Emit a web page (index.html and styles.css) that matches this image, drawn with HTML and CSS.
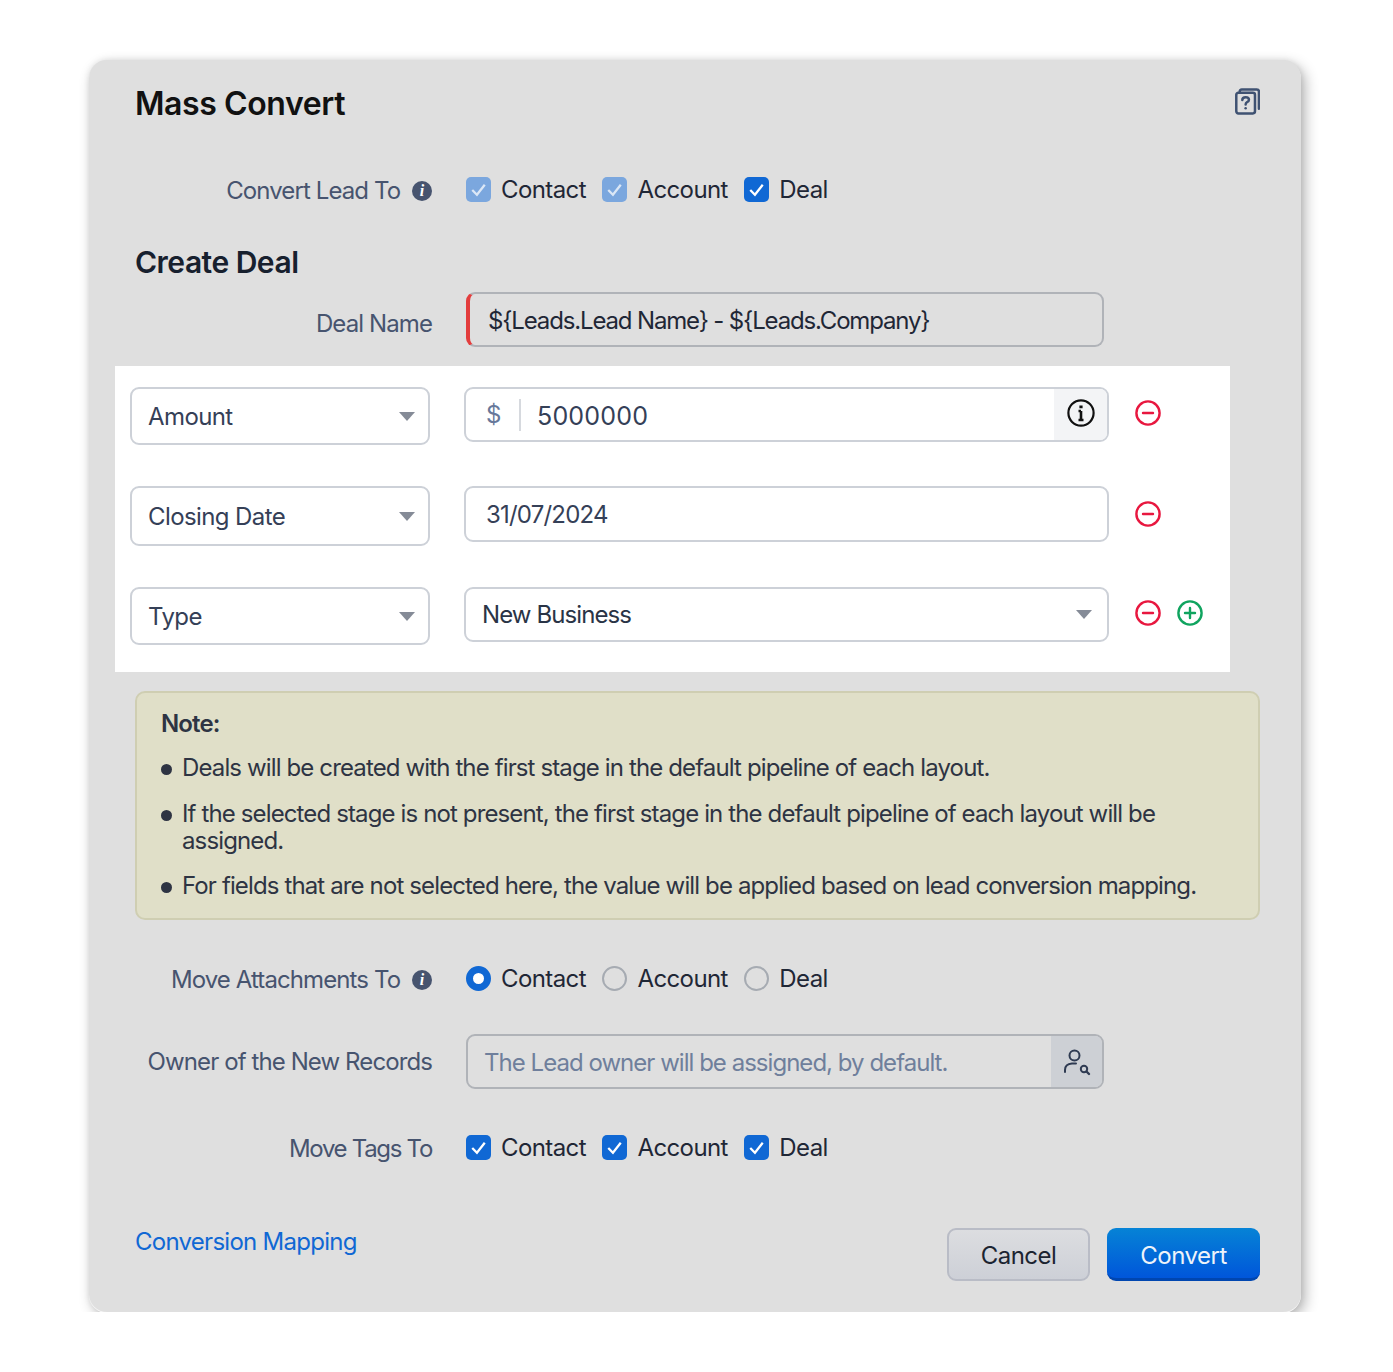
FILE: index.html

```html
<!doctype html>
<html lang="en">
<head>
    <meta charset="utf-8">
    <meta name="viewport" content="width=device-width, initial-scale=1.0">
    <title>Mass Convert</title>
    <link rel="stylesheet" href="styles.css">
</head>
<body>
    <div class="dialog">
        <div class="dialog-head">
            <h1>Mass Convert</h1>
            <svg class="help-icon" viewBox="0 0 24 26" fill="none" stroke="#3f5272" stroke-width="2.4" stroke-linejoin="round" stroke-linecap="round">
                <path d="M4.5 4 V3.5 Q4.5 1.5 6.5 1.5 H21 Q23 1.5 23 3.5 V20"/>
                <rect x="1.2" y="4.5" width="18" height="20" rx="2"/>
                <path d="M7 11.5 Q7 8.8 10.2 8.8 Q13.4 8.8 13.4 11.3 Q13.4 12.8 11.6 13.6 Q10.2 14.3 10.2 16"/>
                <path d="M10.2 19.4 V19.6"/>
            </svg>
        </div>

        <div class="form-row row-convert">
            <div class="label">Convert Lead To <span class="info">i</span></div>
            <div class="options">
                <label class="opt"><span class="check faded"><svg viewBox="0 0 24 24"><path d="M6 12.5 L10.5 17 L18 7.5"/></svg></span>Contact</label>
                <label class="opt"><span class="check faded"><svg viewBox="0 0 24 24"><path d="M6 12.5 L10.5 17 L18 7.5"/></svg></span>Account</label>
                <label class="opt"><span class="check"><svg viewBox="0 0 24 24"><path d="M6 12.5 L10.5 17 L18 7.5"/></svg></span>Deal</label>
            </div>
        </div>

        <h2>Create Deal</h2>

        <div class="form-row row-deal">
            <div class="label label-low">Deal Name</div>
            <div class="field field-required">${Leads.Lead Name} - ${Leads.Company}</div>
        </div>

        <div class="panel">
            <div class="panel-row">
                <div class="select select-left">Amount<span class="arrow"></span></div>
                <div class="input amount">
                    <span class="currency">$</span>
                    <span class="amount-value">5000000</span>
                    <span class="amount-info">
                        <svg width="28" height="28" viewBox="0 0 28 28" fill="none" stroke="#111" stroke-width="2.2">
                            <circle cx="14" cy="14" r="12.6"/>
                            <path d="M14 12 V21 M11.5 12 H14 M11.5 21 H16.5" stroke-width="2.6"/>
                            <path d="M14 6.5 V9.2" stroke-width="3.2"/>
                        </svg>
                    </span>
                </div>
                <div class="row-actions">
                    <svg class="round-btn" viewBox="0 0 26 26" fill="none" stroke="#e8173f" stroke-width="2.4" stroke-linecap="round"><circle cx="13" cy="13" r="11.6"/><path d="M8 13 H18"/></svg>
                </div>
            </div>
            <div class="panel-row tall">
                <div class="select select-left">Closing Date<span class="arrow"></span></div>
                <div class="input date">31/07/2024</div>
                <div class="row-actions">
                    <svg class="round-btn" viewBox="0 0 26 26" fill="none" stroke="#e8173f" stroke-width="2.4" stroke-linecap="round"><circle cx="13" cy="13" r="11.6"/><path d="M8 13 H18"/></svg>
                </div>
            </div>
            <div class="panel-row">
                <div class="select select-left">Type<span class="arrow"></span></div>
                <div class="input select select-right">New Business<span class="arrow"></span></div>
                <div class="row-actions">
                    <svg class="round-btn" viewBox="0 0 26 26" fill="none" stroke="#e8173f" stroke-width="2.4" stroke-linecap="round"><circle cx="13" cy="13" r="11.6"/><path d="M8 13 H18"/></svg>
                    <svg class="round-btn" viewBox="0 0 26 26" fill="none" stroke="#10a45f" stroke-width="2.4" stroke-linecap="round"><circle cx="13" cy="13" r="11.6"/><path d="M8 13 H18 M13 8 V18"/></svg>
                </div>
            </div>
        </div>

        <div class="note">
            <div class="note-title">Note:</div>
            <ul>
                <li>Deals will be created with the first stage in the default pipeline of each layout.</li>
                <li>If the selected stage is not present, the first stage in the default pipeline of each layout will be assigned.</li>
                <li>For fields that are not selected here, the value will be applied based on lead conversion mapping.</li>
            </ul>
        </div>

        <div class="form-row row-attach">
            <div class="label">Move Attachments To <span class="info">i</span></div>
            <div class="options">
                <label class="opt"><span class="radio on"></span>Contact</label>
                <label class="opt"><span class="radio"></span>Account</label>
                <label class="opt"><span class="radio"></span>Deal</label>
            </div>
        </div>

        <div class="form-row row-owner">
            <div class="label">Owner of the New Records</div>
            <div class="field owner">
                <span class="owner-text">The Lead owner will be assigned, by default.</span>
                <span class="owner-btn">
                    <svg width="30" height="30" viewBox="0 0 30 30" fill="none" stroke="#2f3b52" stroke-width="2" stroke-linecap="round">
                        <circle cx="12.5" cy="8.5" r="5"/>
                        <path d="M3 25 V23 Q3 17 10 16.5 H14"/>
                        <circle cx="22" cy="22" r="3.2"/>
                        <path d="M24.5 24.5 L27 27" stroke-width="2.4"/>
                    </svg>
                </span>
            </div>
        </div>

        <div class="form-row row-tags">
            <div class="label label-tight">Move Tags To</div>
            <div class="options">
                <label class="opt"><span class="check"><svg viewBox="0 0 24 24"><path d="M6 12.5 L10.5 17 L18 7.5"/></svg></span>Contact</label>
                <label class="opt"><span class="check"><svg viewBox="0 0 24 24"><path d="M6 12.5 L10.5 17 L18 7.5"/></svg></span>Account</label>
                <label class="opt"><span class="check"><svg viewBox="0 0 24 24"><path d="M6 12.5 L10.5 17 L18 7.5"/></svg></span>Deal</label>
            </div>
        </div>

        <div class="dialog-foot">
            <a href="#" class="map-link">Conversion Mapping</a>
            <div class="buttons">
                <button class="btn btn-cancel">Cancel</button>
                <button class="btn btn-convert">Convert</button>
            </div>
        </div>
    </div>
</body>
</html>
```

FILE: styles.css

```css
* {
    box-sizing: border-box;
}
body {
    font-family: Inter, "Liberation Sans", sans-serif;
    font-size: 24px;
    letter-spacing: -0.4px;
    color: #1f2736;
    background-color: #fff;
    margin: 0;
    padding: 60px 0 0 89px;
}
.dialog {
    width: 1212px;
    height: 1252px;
    padding: 0 41px 0 46px;
    background-color: #dfdfdf;
    border-radius: 18px;
    box-shadow: 0 1px 0 #f7f7f7, 4px 5px 14px rgba(0, 0, 0, 0.3), 0 0 6px rgba(0, 0, 0, 0.08);
}
.dialog-head {
    display: flex;
    justify-content: space-between;
    height: 88px;
    padding-top: 24px;
}
.dialog-head h1 {
    margin: 0;
    font-size: 32px;
    line-height: 40px;
    font-weight: 600;
    color: #111;
}
.help-icon {
    width: 25px;
    height: 27px;
    margin-top: 4px;
}
.form-row {
    display: flex;
    align-items: center;
    gap: 34px;
}
.label {
    width: 297px;
    flex: none;
    text-align: right;
    color: #47546f;
    letter-spacing: -0.9px;
}
.label-low {
    padding-top: 8px;
}
.label-tight {
    letter-spacing: -1.3px;
}
.info {
    display: inline-block;
    width: 20px;
    height: 20px;
    margin-left: 6px;
    border-radius: 50%;
    background-color: #47546f;
    color: #fff;
    font-family: "Liberation Serif", serif;
    font-size: 16px;
    font-weight: 700;
    font-style: italic;
    line-height: 20px;
    text-align: center;
    letter-spacing: 0;
    vertical-align: 3px;
}
.options {
    display: flex;
    gap: 16.5px;
}
.opt {
    display: flex;
    align-items: center;
    gap: 10px;
    line-height: 30px;
    letter-spacing: -0.6px;
}
.check {
    width: 25px;
    height: 25px;
    margin-bottom: 2px;
    border-radius: 5px;
    background-color: #1068d4;
}
.check svg {
    display: block;
    fill: none;
    stroke: #fff;
    stroke-width: 2.2;
}
.check.faded {
    background-color: #7ba7de;
}
.check.faded svg {
    stroke: #dbe7f6;
}
.radio {
    width: 25px;
    height: 25px;
    margin-bottom: 2px;
    border-radius: 50%;
    border: 2px solid #a6abb2;
}
.radio.on {
    border: 7px solid #1068d4;
    background-color: #fff;
}
.row-convert {
    height: 30px;
    margin-top: 27px;
}
h2 {
    margin: 40px 0 0;
    font-size: 30px;
    line-height: 34px;
    font-weight: 600;
    letter-spacing: -0.5px;
    color: #17202e;
}
.row-deal {
    margin-top: 13px;
}
.field {
    width: 638px;
    height: 55px;
    border: 2px solid #b0b3b8;
    border-radius: 9px;
}
.field-required {
    padding-left: 18px;
    line-height: 53px;
    letter-spacing: -1.15px;
    border-left: 4px solid #e33d3d;
}
.panel {
    width: 1115px;
    height: 306px;
    margin: 19px 0 0 -20px;
    padding: 21px 0 0 15px;
    background-color: #fff;
}
.panel-row {
    display: flex;
    align-items: flex-start;
    height: 58px;
    margin-bottom: 41px;
    color: #354057;
    letter-spacing: -0.6px;
}
.panel-row.tall {
    height: 60px;
}
.panel-row.tall .row-actions {
    padding-top: 15px;
}
.select {
    display: flex;
    align-items: center;
    justify-content: space-between;
}
.select-left {
    width: 300px;
    height: 100%;
    padding: 0 13px 0 16px;
    border: 2px solid #cdd1d8;
    border-radius: 9px;
    background-color: #fff;
}
.arrow {
    width: 0;
    height: 0;
    border-left: 8px solid transparent;
    border-right: 8px solid transparent;
    border-top: 9px solid #858b97;
}
.input {
    width: 645px;
    height: 55px;
    margin-left: 34px;
    border: 2px solid #cdd1d8;
    border-radius: 9px;
    background-color: #fff;
}
.amount {
    display: flex;
    align-items: center;
    overflow: hidden;
}
.currency {
    flex: none;
    width: 35px;
    height: 32px;
    margin-left: 20px;
    line-height: 32px;
    color: #67789a;
    border-right: 2px solid #d6d9de;
}
.amount-value {
    flex: 1;
    padding: 2px 0 0 16px;
    font-size: 25px;
    letter-spacing: 0.2px;
}
.amount-info {
    display: flex;
    align-items: center;
    justify-content: center;
    width: 53px;
    height: 100%;
    padding-bottom: 4px;
    background-color: #f3f4f6;
}
.date {
    height: 56px;
    padding-left: 20px;
    line-height: 54px;
    letter-spacing: -0.8px;
}
.select-right {
    padding: 0 15px 0 16px;
    letter-spacing: -0.9px;
    color: #2a3446;
}
.row-actions {
    display: flex;
    gap: 16px;
    margin-left: 26px;
    padding-top: 13px;
}
.round-btn {
    width: 26px;
    height: 26px;
}
.note {
    width: 1125px;
    height: 229px;
    margin-top: 19px;
    padding: 17px 24px 0;
    background-color: #e0dfc8;
    border: 2px solid #cfceb2;
    border-radius: 10px;
    line-height: 27px;
    letter-spacing: -0.87px;
    color: #2e3443;
}
.note-title {
    font-weight: 600;
    margin-bottom: 17px;
}
.note ul {
    list-style: none;
    margin: 0;
    padding: 0;
}
.note li {
    display: flex;
    gap: 10px;
    margin-bottom: 18.5px;
}
.note li::before {
    content: "";
    flex: none;
    width: 11px;
    height: 11px;
    margin-top: 10px;
    border-radius: 50%;
    background-color: #2e3443;
}
.row-attach {
    height: 30px;
    margin-top: 44px;
}
.row-owner {
    margin-top: 40px;
}
.owner {
    display: flex;
    align-items: center;
    justify-content: space-between;
    overflow: hidden;
}
.owner-text {
    padding: 2px 0 0 16px;
    letter-spacing: -0.97px;
    color: #6f7f9c;
}
.owner-btn {
    display: flex;
    align-items: center;
    justify-content: center;
    width: 51px;
    height: 100%;
    background-color: #cdd0d5;
}
.row-tags {
    height: 30px;
    margin-top: 44px;
}
.dialog-foot {
    display: flex;
    justify-content: space-between;
    margin-top: 65px;
}
.map-link {
    color: #1068d4;
    text-decoration: none;
    letter-spacing: -0.73px;
    line-height: 28px;
}
.buttons {
    display: flex;
    gap: 17px;
}
.btn {
    height: 53px;
    padding-top: 2px;
    font-family: inherit;
    font-size: 24px;
    letter-spacing: -0.5px;
    border-radius: 9px;
    cursor: pointer;
}
.btn-cancel {
    width: 143px;
    color: #1c2431;
    background: linear-gradient(#dcdde0, #cdd0d7);
    border: 2px solid #b9bcc6;
}
.btn-convert {
    width: 153px;
    padding-top: 5px;
    color: #eef3fa;
    background: linear-gradient(#0683d6, #0056da);
    border: none;
    border-bottom: 3px solid #0046b0;
}
```
